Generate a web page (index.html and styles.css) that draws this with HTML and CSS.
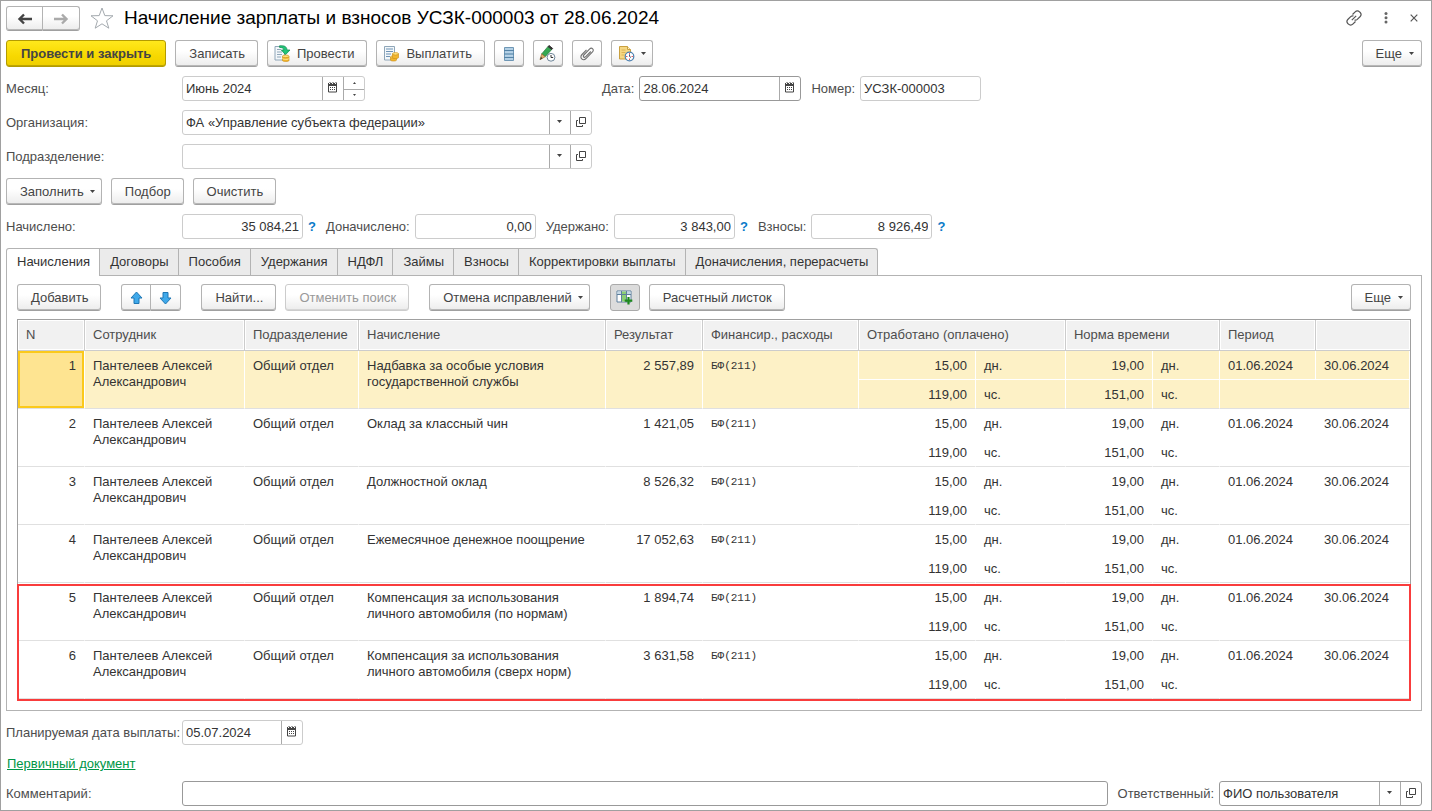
FILE: index.html
```html
<!DOCTYPE html>
<html lang="ru">
<head>
<meta charset="utf-8">
<title>Начисление зарплаты и взносов</title>
<link rel="stylesheet" href="styles.css">
</head>
<body>
<svg class="defs" aria-hidden="true">
  <symbol id="cal" viewBox="0 0 11 11"><path d="M1.500 1.500h8v8.500h-8z" fill="#fff" stroke="#444"/><path d="M1 1h9v3H1z" fill="#444"/><path d="M2.500 0v2M5.500 0v2M8.500 0v2" stroke="#fff"/><path d="M3 0v1M6 0v1M9 0v1" stroke="#444"/><path d="M3 5.500h1m1 0h1m1 0h1M3 7.500h1m1 0h1m1 0h1" stroke="#444"/></symbol>
  <symbol id="open" viewBox="0 0 10 10"><path d="M3.500.5h6v6h-6z" fill="none" stroke="#444"/><path d="M2 3.500H.5v6h6V8" fill="none" stroke="#444"/></symbol>
  <symbol id="down" viewBox="0 0 5 3"><path d="M0 0h5L2.500 3z" fill="#444"/></symbol>
</svg>
<main class="window">
  <header class="titlebar">
    <div class="pair">
      <button class="btn" aria-label="Назад"><svg width="16" height="12" viewBox="0 0 16 12"><path d="M2 6h13M7 1.500L2.500 6 7 10.500" fill="none" stroke="#444" stroke-width="2.400"/></svg></button>
      <button class="btn" aria-label="Вперед"><svg width="16" height="12" viewBox="0 0 16 12"><path d="M1 6h13M9 1.500L13.500 6 9 10.500" fill="none" stroke="#aaa" stroke-width="2.400"/></svg></button>
    </div>
    <button class="plain" aria-label="В избранное"><svg width="24" height="22" viewBox="0 0 24 22"><path d="M12 1l2.800 7.600 8.200.2-6.500 5 2.300 7.400-6.800-4.400-6.800 4.400 2.300-7.400-6.500-5 8.200-.2z" fill="#fff" stroke="#a3a9ae"/></svg></button>
    <h1>Начисление зарплаты и взносов УСЗК-000003 от 28.06.2024</h1>
    <div class="wintools">
      <button class="plain" aria-label="Ссылка"><svg width="16" height="16" viewBox="0 0 16 16" fill="none" stroke="#555" stroke-width="1.200"><path d="M6.500 4.500l2.700-2.700a3 3 0 0 1 4.300 0l.7.700a3 3 0 0 1 0 4l-2.900 2.900a3 3 0 0 1-2.800.6M9.500 11.500l-2.700 2.700a3 3 0 0 1-4.300 0l-.7-.7a3 3 0 0 1 0-4l2.900-2.900a3 3 0 0 1 2.800-.6M5.800 10.200l4.400-4.400"/></svg></button>
      <button class="plain" aria-label="Меню"><svg width="4" height="12" viewBox="0 0 4 12" fill="#666"><circle cx="2" cy="1.600" r="1.500"/><circle cx="2" cy="5.800" r="1.500"/><circle cx="2" cy="10" r="1.500"/></svg></button>
      <button class="plain" aria-label="Закрыть"><svg width="8" height="8" viewBox="0 0 8 8"><path d="M.7.7l6.600 6.600M7.300.7L.7 7.300" stroke="#555" stroke-width="1.200"/></svg></button>
    </div>
  </header>

  <div class="bar">
    <button class="btn primary">Провести и закрыть</button>
    <button class="btn">Записать</button>
    <button class="btn icontext"><svg width="17" height="17" viewBox="0 0 17 17"><path d="M1 1.500h9.500V15H1z" fill="#f3f7fa" stroke="#8fa6b8"/><path d="M3 4.500h4M3 7h5M3 9.500h5M3 12h4" stroke="#8fa6b8"/><path d="M5.500.8c5-.6 7.500 1 7.500 4.200h3l-4.500 4.700L7.300 5h2.600c0-1.600-1.400-2.500-4.400-2.600z" fill="#22c578" stroke="#128a50" stroke-width=".7"/><path d="M8.500 11.500v4c0 1.300 6.500 1.300 6.500 0v-4z" fill="#f2b62d" stroke="#c98a12" stroke-width=".6"/><ellipse cx="11.700" cy="11.300" rx="3.300" ry="1.300" fill="#ffe37c" stroke="#c98a12" stroke-width=".6"/><path d="M8.500 13.500c0 1.200 6.500 1.200 6.500 0" fill="none" stroke="#fff0a8" stroke-width=".8"/></svg>Провести</button>
    <button class="btn icontext"><svg width="17" height="17" viewBox="0 0 17 17"><path d="M1.500 1.500h10V15h-10z" fill="#f3f7fa" stroke="#8fa6b8"/><path d="M3 4h7M3 6.500h7M3 9h5M3 11.500h4" stroke="#6d93b5"/><path d="M7.500 12v3c0 1.400 6 1.400 6 0v-3z" fill="#f2b62d" stroke="#c98a12" stroke-width=".6"/><ellipse cx="10.500" cy="12" rx="3" ry="1.200" fill="#ffe37c" stroke="#c98a12" stroke-width=".6"/><path d="M9.500 8.800v3.800c0 1.300 6 1.300 6 0V8.800z" fill="#f2b62d" stroke="#c98a12" stroke-width=".6"/><ellipse cx="12.500" cy="8.800" rx="3" ry="1.200" fill="#ffe37c" stroke="#c98a12" stroke-width=".6"/></svg>Выплатить</button>
    <button class="btn icon" aria-label="Реестр"><svg width="12" height="16" viewBox="0 0 12 16"><path d="M1.500 1.500h9v13h-9z" fill="#a9cae2" stroke="#6f97b5"/><path d="M1 4.500h10M1 8h10M1 11.500h10" stroke="#5583a6"/><path d="M2 3h8M2 6.200h8M2 9.700h8M2 13h8" stroke="#bdd6e8"/></svg></button>
    <button class="btn icon" aria-label="Изменить"><svg width="17" height="17" viewBox="0 0 17 17"><path d="M9 1.500l3.700 3-6.500 7.200-3.500-2.800z" fill="#36a852" stroke="#247a3a" stroke-width=".7"/><path d="M9 1.500L10 .5l3.700 3-1 1z" fill="#333" stroke="#333"/><path d="M2.700 8.900l3.500 2.800-5.200 3z" fill="#e0b070" stroke="#9b6a2d" stroke-width=".7"/><path d="M1 14.700l1-2.700 1.500 1.200z" fill="#333"/><circle cx="12" cy="12.300" r="3.900" fill="#fff" stroke="#6d8598"/><path d="M12 10v2.500h2.200" fill="none" stroke="#333"/></svg></button>
    <button class="btn icon" aria-label="Файлы"><svg width="16" height="16" viewBox="0 0 16 16"><path d="M11.800 5.500l-5 5.200c-1.500 1.500-3.400-.2-2-1.700l5.700-5.900c2.300-2.300 5.200.5 3 2.800l-6.300 6.500c-3.200 3.200-7.300-.7-4.200-3.900l4.500-4.700" fill="none" stroke="#707070" stroke-width="1.100"/></svg></button>
    <button class="btn icon drop" aria-label="Создать на основании"><svg width="17" height="17" viewBox="0 0 17 17"><path d="M1.500 1.500h8l3 3V14h-11z" fill="#f5d783" stroke="#c9a040"/><path d="M9.500 1.500v3h3" fill="#fff2c4" stroke="#c9a040"/><path d="M3.500 5h4M3.500 7.500h4M3.500 10h3" stroke="#dcb455"/><circle cx="11.500" cy="11.500" r="4.300" fill="#fff" stroke="#4c80b0" stroke-width="1.200"/><path d="M11.500 8.200v1.200M11.500 13.600v1.200M8.200 11.500h1.200M13.600 11.500h1.200" stroke="#e03030"/><path d="M11.500 11.500V9.500M11.500 11.500l1.500 1" stroke="#355b80"/></svg><svg class="caret"><use href="#down"/></svg></button>
    <button class="btn more end">Еще<svg class="caret"><use href="#down"/></svg></button>
  </div>

  <div class="form">
    <label for="month">Месяц:</label>
    <div class="field month"><input id="month" value="Июнь 2024"><button aria-label="Календарь"><svg class="cal"><use href="#cal"/></svg></button><span class="spin"><button aria-label="Больше"><svg width="3" height="2"><path d="M0 2h3L1.500 0z" fill="#444"/></svg></button><button aria-label="Меньше"><svg width="3" height="2"><path d="M0 0h3L1.500 2z" fill="#444"/></svg></button></span></div>
    <div class="docid">
      <label for="date">Дата:</label>
      <div class="field dark date"><input id="date" value="28.06.2024"><button aria-label="Календарь"><svg class="cal"><use href="#cal"/></svg></button></div>
      <label for="num">Номер:</label>
      <div class="field short"><input id="num" value="УСЗК-000003"></div>
    </div>
    <label for="org">Организация:</label>
    <div class="field"><input id="org" value="ФА «Управление субъекта федерации»"><button aria-label="Выбрать"><svg class="caret"><use href="#down"/></svg></button><button aria-label="Открыть"><svg class="open"><use href="#open"/></svg></button></div>
    <span></span>
    <label for="dep">Подразделение:</label>
    <div class="field"><input id="dep"><button aria-label="Выбрать"><svg class="caret"><use href="#down"/></svg></button><button aria-label="Открыть"><svg class="open"><use href="#open"/></svg></button></div>
    <span></span>
  </div>

  <div class="bar">
    <button class="btn dropdown">Заполнить<svg class="caret"><use href="#down"/></svg></button>
    <button class="btn">Подбор</button>
    <button class="btn">Очистить</button>
  </div>

  <div class="totals">
    <label class="lead" for="t1">Начислено:</label>
    <div class="field short num"><input id="t1" value="35 084,21"></div>
    <button class="help">?</button>
    <label for="t2">Доначислено:</label>
    <div class="field short num"><input id="t2" value="0,00"></div>
    <label class="after" for="t3">Удержано:</label>
    <div class="field short num"><input id="t3" value="3 843,00"></div>
    <button class="help">?</button>
    <label for="t4">Взносы:</label>
    <div class="field short num"><input id="t4" value="8 926,49"></div>
    <button class="help">?</button>
  </div>

  <div class="tabs" role="tablist">
    <button role="tab" aria-selected="true">Начисления</button><button role="tab">Договоры</button><button role="tab">Пособия</button><button role="tab">Удержания</button><button role="tab">НДФЛ</button><button role="tab">Займы</button><button role="tab">Взносы</button><button role="tab">Корректировки выплаты</button><button role="tab">Доначисления, перерасчеты</button>
  </div>
  <section class="panel">
    <div class="bar groups">
      <button class="btn">Добавить</button>
      <div class="pair">
        <button class="btn" aria-label="Вверх"><svg width="13" height="14" viewBox="0 0 13 14"><path d="M6.500 1l5.500 6H9v5.500H4V7H1z" fill="#3fa9ea" stroke="#1f77b4"/></svg></button>
        <button class="btn" aria-label="Вниз"><svg width="13" height="14" viewBox="0 0 13 14"><path d="M6.500 13L1 7h3V1.500h5V7h3z" fill="#3fa9ea" stroke="#1f77b4"/></svg></button>
      </div>
      <div class="group">
        <button class="btn">Найти...</button>
        <button class="btn" disabled>Отменить поиск</button>
      </div>
      <button class="btn dropdown">Отмена исправлений<svg class="caret"><use href="#down"/></svg></button>
      <div class="group">
        <button class="btn icon pressed" aria-label="Колонки"><svg width="17" height="15" viewBox="0 0 17 15"><path d="M1 1h14v11H1z" fill="#fff" stroke="#5d7f9c"/><path d="M1.500 1.500h13V4h-13z" fill="#c5d8e6"/><path d="M6 1.500h4v10H6z" fill="#8ccf74"/><path d="M1 4.500h14M5.500 1v11M10.500 1v11" stroke="#5d7f9c"/><path d="M12.500 7v7.500M8.700 10.700h7.600" stroke="#1e8a1e" stroke-width="2.200"/></svg></button>
        <button class="btn">Расчетный листок</button>
      </div>
      <button class="btn more end">Еще<svg class="caret"><use href="#down"/></svg></button>
    </div>
    <table>
      <colgroup><col class="c-n"><col class="c-emp"><col class="c-dep"><col><col class="c-res"><col class="c-fin"><col class="c-wv"><col class="c-wu"><col class="c-nv"><col class="c-nu"><col class="c-from"><col class="c-to"></colgroup>
      <thead><tr><th>N</th><th>Сотрудник</th><th>Подразделение</th><th>Начисление</th><th>Результат</th><th>Финансир., расходы</th><th colspan="2">Отработано (оплачено)</th><th colspan="2">Норма времени</th><th>Период</th><th></th></tr></thead>
      <tbody class="current">
        <tr><td rowspan="2" class="r cursor">1</td><td rowspan="2">Пантелеев Алексей Александрович</td><td rowspan="2">Общий отдел</td><td rowspan="2">Надбавка за особые условия государственной службы</td><td rowspan="2" class="r">2 557,89</td><td rowspan="2" class="mono">БФ(211)</td><td class="r">15,00</td><td>дн.</td><td class="r">19,00</td><td>дн.</td><td>01.06.2024</td><td>30.06.2024</td></tr>
        <tr><td class="r">119,00</td><td>чс.</td><td class="r">151,00</td><td>чс.</td><td colspan="2"></td></tr>
      </tbody>
      <tbody>
        <tr><td rowspan="2" class="r">2</td><td rowspan="2">Пантелеев Алексей Александрович</td><td rowspan="2">Общий отдел</td><td rowspan="2">Оклад за классный чин</td><td rowspan="2" class="r">1 421,05</td><td rowspan="2" class="mono">БФ(211)</td><td class="r">15,00</td><td>дн.</td><td class="r">19,00</td><td>дн.</td><td>01.06.2024</td><td>30.06.2024</td></tr>
        <tr><td class="r">119,00</td><td>чс.</td><td class="r">151,00</td><td>чс.</td><td colspan="2"></td></tr>
      </tbody>
      <tbody>
        <tr><td rowspan="2" class="r">3</td><td rowspan="2">Пантелеев Алексей Александрович</td><td rowspan="2">Общий отдел</td><td rowspan="2">Должностной оклад</td><td rowspan="2" class="r">8 526,32</td><td rowspan="2" class="mono">БФ(211)</td><td class="r">15,00</td><td>дн.</td><td class="r">19,00</td><td>дн.</td><td>01.06.2024</td><td>30.06.2024</td></tr>
        <tr><td class="r">119,00</td><td>чс.</td><td class="r">151,00</td><td>чс.</td><td colspan="2"></td></tr>
      </tbody>
      <tbody>
        <tr><td rowspan="2" class="r">4</td><td rowspan="2">Пантелеев Алексей Александрович</td><td rowspan="2">Общий отдел</td><td rowspan="2">Ежемесячное денежное поощрение</td><td rowspan="2" class="r">17 052,63</td><td rowspan="2" class="mono">БФ(211)</td><td class="r">15,00</td><td>дн.</td><td class="r">19,00</td><td>дн.</td><td>01.06.2024</td><td>30.06.2024</td></tr>
        <tr><td class="r">119,00</td><td>чс.</td><td class="r">151,00</td><td>чс.</td><td colspan="2"></td></tr>
      </tbody>
      <tbody class="marked">
        <tr><td rowspan="2" class="r">5</td><td rowspan="2">Пантелеев Алексей Александрович</td><td rowspan="2">Общий отдел</td><td rowspan="2">Компенсация за использования личного автомобиля (по нормам)</td><td rowspan="2" class="r">1 894,74</td><td rowspan="2" class="mono">БФ(211)</td><td class="r">15,00</td><td>дн.</td><td class="r">19,00</td><td>дн.</td><td>01.06.2024</td><td>30.06.2024</td></tr>
        <tr><td class="r">119,00</td><td>чс.</td><td class="r">151,00</td><td>чс.</td><td colspan="2"></td></tr>
        <tr><td rowspan="2" class="r">6</td><td rowspan="2">Пантелеев Алексей Александрович</td><td rowspan="2">Общий отдел</td><td rowspan="2">Компенсация за использования личного автомобиля (сверх норм)</td><td rowspan="2" class="r">3 631,58</td><td rowspan="2" class="mono">БФ(211)</td><td class="r">15,00</td><td>дн.</td><td class="r">19,00</td><td>дн.</td><td>01.06.2024</td><td>30.06.2024</td></tr>
        <tr><td class="r">119,00</td><td>чс.</td><td class="r">151,00</td><td>чс.</td><td colspan="2"></td></tr>
      </tbody>
    </table>
  </section>

  <footer class="foot">
    <div class="line">
      <label class="lead" for="pay">Планируемая дата выплаты:</label>
      <div class="field short"><input id="pay" value="05.07.2024"><button aria-label="Календарь"><svg class="cal"><use href="#cal"/></svg></button></div>
    </div>
    <a href="#">Первичный документ</a>
    <div class="line">
      <label class="lead" for="com">Комментарий:</label>
      <div class="field dark grow"><input id="com"></div>
      <label class="after" for="resp">Ответственный:</label>
      <div class="field dark resp"><input id="resp" value="ФИО пользователя"><button aria-label="Выбрать"><svg class="caret"><use href="#down"/></svg></button><button aria-label="Открыть"><svg class="open"><use href="#open"/></svg></button></div>
    </div>
  </footer>
</main>
</body>
</html>
```
FILE: styles.css
```css
* { box-sizing: border-box; }
body { margin: 0; background: #fff; color: #333; }
body, button, input { font-family: "Liberation Sans", Arial, sans-serif; font-size: 13px; line-height: 16px; }
button, input { margin: 0; padding: 0; border: 0; background: none; color: inherit; }
svg { display: block; flex: none; }
.defs { position: absolute; width: 0; height: 0; }
label { color: #4d4d4d; white-space: nowrap; }
.caret { width: 5px; height: 3px; }
.cal { width: 11px; height: 11px; }
.open { width: 10px; height: 10px; }

.window { min-height: 100vh; border: 1px solid #a0a0a0; padding: 5px 9px 4px 5px; }

.titlebar { display: flex; align-items: flex-start; height: 25px; }
.plain { display: flex; align-items: center; height: 24px; }
.titlebar > .plain { margin: 0 10px; }
h1 { margin: 0; font-size: 19px; line-height: 24px; font-weight: normal; color: #000; white-space: nowrap; }
.wintools { display: flex; gap: 22px; margin-left: auto; padding-right: 4px; }

.btn { display: flex; align-items: center; justify-content: center; height: 27px; padding: 0 12px 0 13px; border: 1px solid #b3b3b3; border-bottom-color: #a0a0a0; border-radius: 3px; background: linear-gradient(#fff 40%, #ececec); box-shadow: inset 0 -1px #b8b8b8; color: #444; white-space: nowrap; }
.btn:disabled { color: #999; border-color: #ccc; box-shadow: inset 0 -1px #d6d6d6; }
.primary { padding: 0 14px; border-color: #b39b00; background: linear-gradient(#ffe81c, #f7d800 60%, #efcf00); box-shadow: inset 0 -1px #bfa600; font-weight: bold; }
.pair { display: flex; }
.pair .btn { width: 30px; padding: 0; }
.pair .btn:first-child { border-radius: 3px 0 0 3px; }
.pair .btn:last-child { border-left: 0; border-radius: 0 3px 3px 0; }
.titlebar .pair .btn { width: 37px; height: 25px; }
.icontext { gap: 6px; padding-left: 6px; }
.btn.icon { width: 30px; padding: 0; }
.btn.drop { width: 42px; gap: 6px; }
.dropdown { gap: 6px; padding-right: 6px; }
.more { gap: 7px; padding-right: 7px; }
.end { margin-left: auto; }
.pressed { background: #dcdcdc; border-color: #aaa; box-shadow: none; }

.bar { display: flex; gap: 9px; margin: 9px 0; }
.groups { gap: 20px; margin: 0 0 8px; }
.group { display: flex; gap: 9px; }

.form { display: grid; grid-template-columns: 176px 410px auto; align-items: center; row-gap: 9px; }
.field { display: flex; height: 25px; border: 1px solid #ccc; border-radius: 3px; background: #fff; }
.field input { flex: 1; min-width: 0; padding: 0 3px; outline: 0; }
.field button { display: flex; align-items: center; justify-content: center; width: 21px; padding: 0 1px 2px 0; border-left: 1px solid #aaa; }
.dark { border-color: #999; }
.month { width: 183px; }
.spin { display: grid; grid-template-rows: 1fr 1fr; border-left: 1px solid #aaa; }
.field .spin button { width: 20px; padding: 0; border-left: 0; }
.field .spin button + button { border-top: 1px solid #aaa; }
.docid { display: flex; align-items: center; gap: 5px; padding-left: 10px; }
.date { width: 162px; margin-right: 5px; }
.short { width: 121px; }
.num input { text-align: right; }

.totals { display: flex; align-items: center; gap: 5px; margin-bottom: 9px; }
.lead { width: 171px; }
.help { width: 8px; margin-right: 5px; color: #0a7ac8; font-weight: bold; }
.after { margin-left: 5px; }

.tabs { display: flex; }
.tabs button { height: 27px; padding: 0 9px 0 10px; border: 1px solid #b3b3b3; border-left: 0; border-bottom: 0; background: #ebebeb; white-space: nowrap; }
.tabs button:first-child { border-left: 1px solid #b3b3b3; border-radius: 3px 0 0 0; height: 28px; margin-bottom: -1px; padding-bottom: 1px; background: #fff; }
.tabs button:last-child { border-radius: 0 3px 0 0; }
.panel { border: 1px solid #b3b3b3; padding: 8px 10px 11px; }

table { width: 100%; table-layout: fixed; border-collapse: separate; border-spacing: 0; border: 1px solid #a0a0a0; border-bottom: 0; }
.c-n { width: 67px; }
.c-emp { width: 160px; }
.c-dep { width: 114px; }
.c-res { width: 97px; }
.c-fin { width: 156px; }
.c-wv { width: 117px; }
.c-wu { width: 90px; }
.c-nv { width: 87px; }
.c-nu { width: 67px; }
.c-from { width: 96px; }
.c-to { width: 94px; }
th { height: 31px; padding: 0 8px; border-right: 1px solid #ccc; border-bottom: 1px solid #ccc; background: #f1f1f1; box-shadow: inset 0 0 0 1px #fff; text-align: left; font-weight: normal; color: #4d4d4d; white-space: nowrap; }
th:last-child { border-right: 0; }
td { height: 29px; padding: 7px 8px 0; border-right: 1px solid #fff; vertical-align: top; }
td[rowspan], tr:nth-child(even) td { border-bottom: 1px solid #e0e0e0; }
.r { text-align: right; }
.mono { font-family: "Liberation Mono", monospace; font-size: 11px; }
.current td { background: #fdf1c6; }
.current tr:first-child td:not([rowspan]) { border-bottom: 1px solid #fff; }
.current .cursor { background: #fee491 padding-box; box-shadow: inset 0 0 0 2px #fbc91b; }
.marked { position: relative; }
.marked::after { content: ""; position: absolute; inset: 1px -1px -2px; border: 2px solid #f93c3c; pointer-events: none; }

.foot { padding-top: 9px; }
.line { display: flex; align-items: center; gap: 5px; }
.foot a { display: inline-block; margin: 11px 1px 9px; color: #009646; }
.grow { flex: 1; }
.resp { width: 203px; }
```
